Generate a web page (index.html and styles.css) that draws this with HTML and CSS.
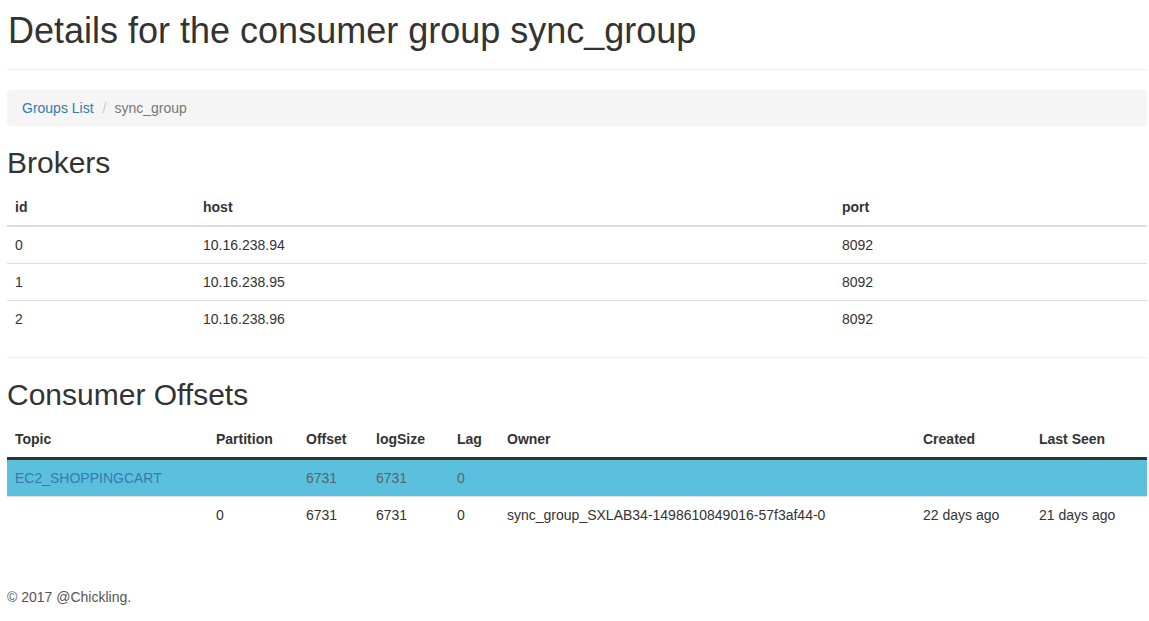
FILE: index.html
```html
<!DOCTYPE html>
<html>
<head>
<meta charset="utf-8">
<title>Consumer group sync_group</title>
<link rel="stylesheet" href="styles.css">
</head>
<body>
<div class="page">
  <h1 class="title">Details for the consumer group sync_group</h1>
  <hr class="rule rule-top">
  <ol class="breadcrumb">
    <li><a href="#">Groups List</a></li>
    <li class="active">sync_group</li>
  </ol>

  <h2 class="section-title">Brokers</h2>
  <table class="table brokers">
    <thead>
      <tr><th class="c-id">id</th><th class="c-host">host</th><th>port</th></tr>
    </thead>
    <tbody>
      <tr><td>0</td><td>10.16.238.94</td><td>8092</td></tr>
      <tr><td>1</td><td>10.16.238.95</td><td>8092</td></tr>
      <tr><td>2</td><td>10.16.238.96</td><td>8092</td></tr>
    </tbody>
  </table>
  <hr class="rule">

  <h2 class="section-title">Consumer Offsets</h2>
  <table class="table offsets">
    <thead>
      <tr>
        <th class="o-topic">Topic</th>
        <th class="o-part">Partition</th>
        <th class="o-off">Offset</th>
        <th class="o-log">logSize</th>
        <th class="o-lag">Lag</th>
        <th class="o-owner">Owner</th>
        <th class="o-created">Created</th>
        <th>Last Seen</th>
      </tr>
    </thead>
    <tbody>
      <tr class="info">
        <td><a href="#">EC2_SHOPPINGCART</a></td>
        <td></td>
        <td>6731</td>
        <td>6731</td>
        <td>0</td>
        <td></td>
        <td></td>
        <td></td>
      </tr>
      <tr>
        <td></td>
        <td>0</td>
        <td>6731</td>
        <td>6731</td>
        <td>0</td>
        <td>sync_group_SXLAB34-1498610849016-57f3af44-0</td>
        <td>22 days ago</td>
        <td>21 days ago</td>
      </tr>
    </tbody>
  </table>

  <footer class="footer">© 2017 @Chickling.</footer>
</div>
</body>
</html>
```

FILE: styles.css
```css
* { box-sizing: border-box; }

html, body {
  margin: 0;
  padding: 0;
  background: #fff;
}

body {
  font-family: "Liberation Sans", Arial, Helvetica, sans-serif;
  font-size: 14px;
  line-height: 20px;
  color: #333;
}

a {
  color: #337ab7;
  text-decoration: none;
}

.page {
  margin: 0 2px 0 7px;
  padding-top: 9px;
}

.title {
  font-size: 36px;
  font-weight: 500;
  line-height: 1.1;
  margin: 0;
  padding: 2px 0 0 1px;
}

.rule {
  margin: 20px 0;
  border: 0;
  border-top: 1px solid #eee;
  height: 0;
}

.rule-top {
  margin-top: 18px;
}

.breadcrumb {
  list-style: none;
  margin: 0 0 20px;
  padding: 8px 15px;
  background: #f5f5f5;
  border-radius: 4px;
  display: flex;
}

.breadcrumb li + li::before {
  content: "/";
  color: #ccc;
  padding: 0 8px 0 9px;
}

.breadcrumb .active {
  color: #777;
}

.section-title {
  font-size: 30px;
  font-weight: 500;
  line-height: 1.1;
  margin: 20px 0 10px;
}

.rule + .section-title {
  margin-top: 0;
}

.table {
  width: 100%;
  border-collapse: collapse;
  border-spacing: 0;
  margin-bottom: 20px;
  table-layout: fixed;
}

.table th,
.table td {
  padding: 8px;
  text-align: left;
  vertical-align: top;
  line-height: 20px;
  height: 37px;
}

.table th {
  font-weight: 700;
  height: 36px;
  border-bottom: 2px solid #ddd;
}

.table td {
  border-top: 1px solid #ddd;
}

.table tbody tr:first-child td {
  border-top: 0;
  height: 36px;
}

.c-id { width: 188px; }
.c-host { width: 639px; }

.offsets th {
  border-bottom: 3px solid #333;
}

.o-topic { width: 201px; }
.o-part { width: 90px; }
.o-off { width: 70px; }
.o-log { width: 81px; }
.o-lag { width: 50px; }
.o-owner { width: 416px; }
.o-created { width: 116px; }

.offsets tr.info td {
  background: #5bc0de;
  color: #55636b;
}

.offsets tr.info td a {
  color: #3a78b0;
}

.footer {
  color: #555;
  padding-top: 33px;
  padding-bottom: 20px;
}
```
